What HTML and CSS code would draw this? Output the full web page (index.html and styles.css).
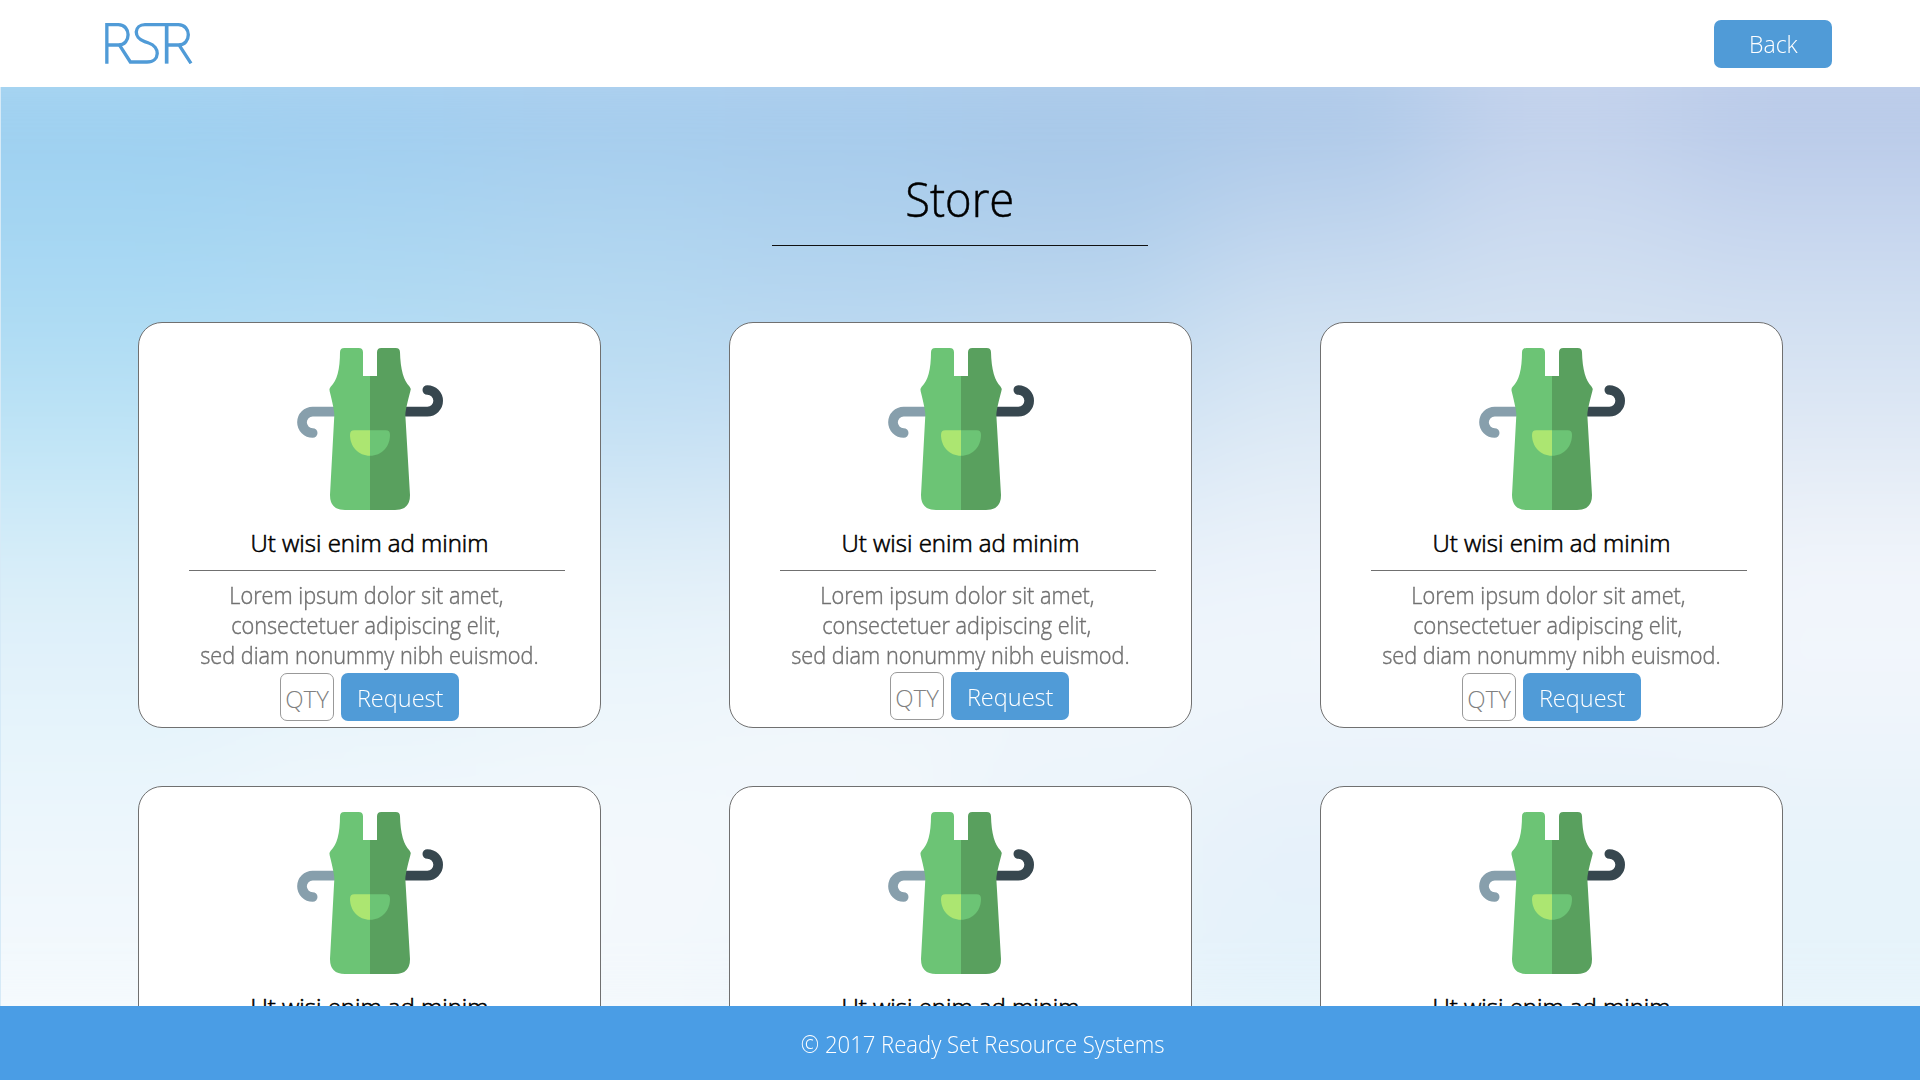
FILE: index.html
```html
<!DOCTYPE html>
<html lang="en">
<head>
<meta charset="utf-8">
<title>Store</title>
<link rel="stylesheet" href="styles.css">
</head>
<body>
<svg width="0" height="0" class="defs">
  <symbol id="apron" viewBox="0 0 540 570">
    <path d="M165 245H98A32 32 0 0 0 98 309" fill="none" stroke="#879fac" stroke-width="29" stroke-linecap="round"/>
    <path d="M375 245H442A32 32 0 0 0 442 180" fill="none" stroke="#37474f" stroke-width="29" stroke-linecap="round"/>
    <path d="M270 138H249V67Q249 54 236 54H193Q180 54 180 67Q180 145 152 170Q147 175 149 184Q163 240 163 255L150 495Q150 540 195 540H270Z" fill="#6cc475"/>
    <path d="M270 138H291V67Q291 54 304 54H347Q360 54 360 67Q362 145 389 170Q394 175 391 184Q376 240 376 255L390 495Q390 540 345 540H270Z" fill="#59a05e"/>
    <path d="M270 301H223Q210 301 210 314C210 350 235 377 270 377Z" fill="#ace671"/>
    <path d="M270 301H317Q330 301 330 314C330 350 305 377 270 377Z" fill="#6cc475"/>
  </symbol>
</svg>
<header class="topbar">
  <svg class="logo" viewBox="0 0 264 122" fill="none" stroke="#509bd7">
    <path d="M5.500 122V5H40C79 5 79 66 40 66H6" stroke-width="10"/>
    <path d="M44 67L76 117H126C166 117 166 70 131 60L119 56C83 44 88 5 120 5H220C260 5 260 66 220 66H187M223 67L258 121" stroke-width="10"/>
    <path d="M185 5V122" stroke-width="11"/>
  </svg>
  <button class="btn"><span class="back">Back</span></button>
</header>
<main class="store">
  <div class="sky"></div>
  <h1 class="heading"><span>Store</span></h1>
  <section class="grid">
    <article class="card">
      <svg class="apron"><use href="#apron"/></svg>
      <h2 class="name">Ut wisi enim ad minim</h2>
      <p class="desc"><span class="l1">Lorem ipsum dolor sit amet,</span><span class="l2">consectetuer adipiscing elit,</span><span class="l3">sed diam nonummy nibh euismod.</span></p>
      <div class="order"><span class="qty">QTY</span><button class="btn"><span class="request">Request</span></button></div>
    </article>
    <article class="card middle">
      <svg class="apron"><use href="#apron"/></svg>
      <h2 class="name">Ut wisi enim ad minim</h2>
      <p class="desc"><span class="l1">Lorem ipsum dolor sit amet,</span><span class="l2">consectetuer adipiscing elit,</span><span class="l3">sed diam nonummy nibh euismod.</span></p>
      <div class="order"><span class="qty">QTY</span><button class="btn"><span class="request">Request</span></button></div>
    </article>
    <article class="card">
      <svg class="apron"><use href="#apron"/></svg>
      <h2 class="name">Ut wisi enim ad minim</h2>
      <p class="desc"><span class="l1">Lorem ipsum dolor sit amet,</span><span class="l2">consectetuer adipiscing elit,</span><span class="l3">sed diam nonummy nibh euismod.</span></p>
      <div class="order"><span class="qty">QTY</span><button class="btn"><span class="request">Request</span></button></div>
    </article>
    <article class="card">
      <svg class="apron"><use href="#apron"/></svg>
      <h2 class="name">Ut wisi enim ad minim</h2>
    </article>
    <article class="card">
      <svg class="apron"><use href="#apron"/></svg>
      <h2 class="name">Ut wisi enim ad minim</h2>
    </article>
    <article class="card">
      <svg class="apron"><use href="#apron"/></svg>
      <h2 class="name">Ut wisi enim ad minim</h2>
    </article>
  </section>
</main>
<footer class="footer"><span>© 2017 Ready Set Resource Systems</span></footer>
</body>
</html>
```
FILE: styles.css
```css
* { box-sizing: border-box; }

body {
  margin: 0;
  height: 1080px;
  overflow: hidden;
  display: flex;
  flex-direction: column;
  background: #fff;
  font-family: "Open Sans", "Noto Sans", sans-serif;
  font-weight: 300;
}

h1, h2, p { margin: 0; font-weight: 300; }

.defs { position: absolute; }

.topbar {
  flex: 0 0 87px;
  display: flex;
  justify-content: space-between;
  align-items: flex-start;
  padding: 20px 88px 0 105px;
}

.logo { width: 88px; height: 40.670px; margin-top: 3px; }

.btn {
  width: 118px;
  height: 48px;
  padding: 0;
  border: 0;
  border-radius: 7px;
  background: #509bd7;
  color: #fff;
  font: inherit;
  font-size: 24px;
  line-height: 48px;
  white-space: nowrap;
}

.back { display: inline-block; transform: scaleX(.96); }
.request { display: inline-block; padding-top: 1px; transform: scaleX(.98); }

.store {
  position: relative;
  flex: 0 0 919px;
  overflow: hidden;
  border-left: 1px solid #d6eaf7;
}

/* soft sky: blurred vertical gradients, one per column */
.sky {
  position: absolute;
  inset: -80px -160px;
  filter: blur(60px);
  background:
    linear-gradient(#9dcfef 80px, #9fd1f1 161px, #a6d7f3 238px, #afdcf3 338px, #bfe4f6 427px, #cfebf8 515px, #dfeff9 604px, #e5f4fb 722px, #eef6fc 840px, #f5fafd 1000px) 0 0 / 400px 100% no-repeat,
    linear-gradient(#9fccef 80px, #a3d0f0 161px, #abd7f2 238px, #b4dcf3 338px, #c2e2f5 427px, #d3ebf7 515px, #e3f1fa 604px, #eaf5fb 722px, #f2f8fc 840px, #f5fafd 1000px) 400px 0 / 240px 100% no-repeat,
    linear-gradient(#a3caed 80px, #a8d0ee 161px, #b0d5f0 238px, #b9dcf2 338px, #c4e0f4 427px, #d8eaf6 515px, #e7f3fa 604px, #eef6fb 722px, #f4f9fc 840px, #f3f8fc 1000px) 640px 0 / 240px 100% no-repeat,
    linear-gradient(#a4c9ec 80px, #a9cdec 161px, #afd2ee 238px, #bcd9f1 338px, #c9e0f3 427px, #dceaf6 515px, #ebf3fa 604px, #f1f7fb 722px, #f3f8fc 840px, #eef6fb 1000px) 880px 0 / 240px 100% no-repeat,
    linear-gradient(#a6c7e9 80px, #a9c9e9 161px, #b2d0ec 238px, #c3dbf0 338px, #d2e4f4 427px, #e2edf8 515px, #eff5fb 604px, #eff6fb 722px, #eaf3fa 840px, #e8f4fb 1000px) 1120px 0 / 240px 100% no-repeat,
    linear-gradient(#a9c6e8 80px, #b4cdea 161px, #c3d7ef 238px, #d2e3f2 338px, #deeaf5 427px, #e8f0f9 515px, #f1f6fc 604px, #edf4fb 722px, #e5f0f9 840px, #e4f3fb 1000px) 1360px 0 / 240px 100% no-repeat,
    linear-gradient(#bdcdea 80px, #c7d6ee 161px, #cddcf0 238px, #d5e3f2 338px, #dfe9f5 427px, #e9eff8 515px, #f1f5fb 604px, #edf4fb 722px, #e6f1f9 840px, #e5f3fb 1000px) 1600px 0 / 240px 100% no-repeat,
    linear-gradient(#b4c6e7 80px, #bfcfeb 161px, #c9d8ef 238px, #d4e2f2 338px, #dfe8f4 427px, #edf2f9 515px, #f4f7fc 604px, #eef4fb 722px, #e6f2f9 840px, #e7f4fb 1000px) 1840px 0 / 400px 100% no-repeat;
}

.heading {
  position: relative;
  width: 376px;
  height: 159px;
  margin: 0 auto 0 771px;
  padding-top: 79px;
  border-bottom: 1px solid #111;
  font-size: 48px;
  line-height: 66px;
  text-align: center;
  color: #000;
  -webkit-text-stroke: .5px;
}

.heading span { display: inline-block; transform: scaleX(.945); }

.grid {
  position: relative;
  display: grid;
  grid-template-columns: repeat(3, 463px);
  grid-auto-rows: 406px;
  gap: 58px 128px;
  padding: 76px 0 0 137px;
}

.card {
  display: flex;
  flex-direction: column;
  align-items: center;
  padding-top: 7px;
  border: 1px solid #707070;
  border-radius: 24px;
  background: #fff;
}

.apron { width: 180px; height: 190px; flex: none; }

.name {
  width: 376px;
  height: 51px;
  margin-left: 14px;
  padding-right: 14px;
  border-bottom: 1px solid #707070;
  font-size: 24px;
  line-height: 46px;
  text-align: center;
  white-space: nowrap;
  color: #000;
  -webkit-text-stroke: .6px;
}

.desc {
  display: flex;
  flex-direction: column;
  align-items: center;
  height: 102px;
  padding-top: 9px;
  font-size: 23px;
  line-height: 30px;
  white-space: nowrap;
  color: #707070;
  -webkit-text-stroke: .4px;
}

.desc span { transform: scaleX(.943); }
.l1, .l2 { margin-right: 7px; }

.order { display: flex; gap: 7px; }
.middle .order { margin: -1px 0 0 38px; }

.qty {
  width: 54px;
  height: 48px;
  border: 1px solid #999;
  border-radius: 7px;
  font-size: 24px;
  line-height: 49px;
  text-align: center;
  color: #808080;
}

.footer {
  flex: 0 0 74px;
  padding-left: 46px;
  background: #4a9de5;
  color: #fff;
  font-size: 24px;
  line-height: 76px;
  text-align: center;
}

.footer span { display: inline-block; transform: scaleX(.92); }
```
